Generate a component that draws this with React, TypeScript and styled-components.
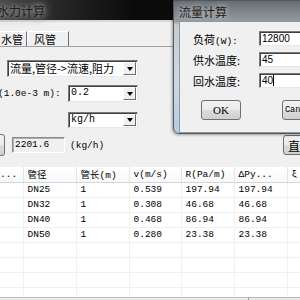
import React from 'react'
import styled, { createGlobalStyle } from 'styled-components'

const GlobalStyle = createGlobalStyle`
  html, body {
    margin: 0;
    padding: 0;
    width: 300px;
    height: 300px;
    overflow: hidden;
    background: #f0f0f0;
  }
`

const Screen = styled.div`
  position: relative;
  width: 300px;
  height: 300px;
  overflow: hidden;
  background: #f0f0f0;
  font-family: "Noto Sans CJK SC", "Liberation Sans", sans-serif;
  font-size: 11px;
  color: #000;
`

const MainTitle = styled.div`
  height: 20px;
  display: flex;
  align-items: center;
  background: linear-gradient(to right, #4a4a4a 0, #262626 20%, #0a0a0a 45%, #111 100%);
  border-bottom: 2px solid #d8d8d8;
  font-size: 12px;
  color: #1c1c1c;
  text-shadow: 0 0 4px #a8a8a8, 0 0 8px #8a8a8a, 0 0 12px #777;
  span {
    margin-left: -3px;
  }
`

const TabStrip = styled.div`
  display: flex;
  margin: 9px 0 0 -6px;
  height: 15px;
  border-bottom: 1px solid #a0a0a0;
`

const Tab = styled.div<{ $w: number }>`
  width: ${p => p.$w}px;
  box-sizing: border-box;
  height: 15px;
  padding-left: 6px;
  border-left: 1px solid #fff;
  border-top: 1px solid #fff;
  border-right: 1px solid #6e6e6e;
  line-height: 14px;
  background: #f0f0f0;
`

const Panel = styled.div`
  display: flex;
  flex-direction: column;
  padding-top: 13px;
`

const Row = styled.div<{ $top: number; $h: number }>`
  display: flex;
  align-items: center;
  margin-top: ${p => p.$top}px;
  height: ${p => p.$h}px;
`

const Label = styled.div<{ $w: number }>`
  width: ${p => p.$w}px;
  margin-left: -2px;
  font-family: "Liberation Mono", "Noto Sans CJK SC", monospace;
  font-size: 9.5px;
  white-space: nowrap;
`

const Combo = styled.div<{ $w: number; $h: number; $left?: number }>`
  display: flex;
  box-sizing: border-box;
  width: ${p => p.$w}px;
  height: ${p => p.$h}px;
  margin-left: ${p => p.$left ?? 0}px;
  border: 1px solid;
  border-color: #7a7a7a #e8e8e8 #e8e8e8 #7a7a7a;
  background: #fff;
  box-shadow: inset 1px 1px 0 #404040;
`

const ComboText = styled.div<{ $mono?: boolean }>`
  flex: 1;
  padding-left: 2px;
  white-space: nowrap;
  overflow: hidden;
  line-height: 14px;
  font-family: ${p => (p.$mono ? '"Liberation Mono", monospace' : '"Noto Sans CJK SC", sans-serif')};
  font-size: ${p => (p.$mono ? '10px' : '11px')};
`

const ArrowButton = styled.div`
  width: 13px;
  margin: 1px;
  background: #f0f0f0;
  border: 1px solid;
  border-color: #fff #6a6a6a #6a6a6a #fff;
  display: flex;
  align-items: center;
  justify-content: center;
  box-sizing: border-box;
  &::after {
    content: '';
    border-left: 3.5px solid transparent;
    border-right: 3.5px solid transparent;
    border-top: 4px solid #000;
  }
`

const PushButton = styled.div<{ $w: number; $h: number; $left?: number; $right?: number }>`
  box-sizing: border-box;
  width: ${p => p.$w}px;
  height: ${p => p.$h}px;
  margin-left: ${p => p.$left ?? 0}px;
  margin-right: ${p => p.$right ?? 0}px;
  border: 1px solid #707070;
  border-radius: 3px;
  background: linear-gradient(#f2f2f2, #ebebeb 50%, #dddddd 51%, #cfcfcf);
  display: flex;
  align-items: center;
  padding-left: 4px;
  font-size: 12px;
`

const ReadOnlyBox = styled.div`
  box-sizing: border-box;
  width: 53px;
  height: 16px;
  margin-left: 7px;
  border: 1px solid;
  border-color: #8a8a8a #fff #fff #8a8a8a;
  box-shadow: inset 1px 1px 0 #b0b0b0;
  background: #f0f0f0;
  padding-left: 2px;
  font-family: "Liberation Mono", monospace;
  font-size: 9.5px;
  line-height: 14px;
`

const Unit = styled.div`
  margin-left: 5px;
  font-family: "Liberation Mono", monospace;
  font-size: 9.5px;
`

const Spacer = styled.div`
  flex: 1;
`

const TableWrap = styled.div`
  margin-top: 10px;
  height: 130px;
  overflow: hidden;
  background: #fff;
`

const Grid = styled.table`
  border-collapse: collapse;
  table-layout: fixed;
  width: 310px;
  font-family: "Liberation Mono", "Noto Sans CJK SC", monospace;
  font-size: 9.5px;
`

const HeadCell = styled.th<{ $w: number }>`
  box-sizing: border-box;
  width: ${p => p.$w}px;
  height: 15px;
  padding: 0 0 0 4px;
  text-align: left;
  font-weight: normal;
  white-space: nowrap;
  overflow: hidden;
  background: linear-gradient(#ffffff, #f7f8fa);
  border-right: 1px solid #e3e5e8;
  border-bottom: 1px solid #d5d5d5;
  &:first-child {
    padding-left: 0;
  }
`

const Cell = styled.td`
  box-sizing: border-box;
  height: 15px;
  padding: 0 0 0 4px;
  white-space: nowrap;
  overflow: hidden;
  border-right: 1px solid #f0f0f0;
  border-bottom: 1px solid #f0f0f0;
`

const Scrollbar = styled.div`
  height: 3px;
  display: flex;
  background: #e8e8e8;
  border-top: 1px solid #b8b8b8;
`

const Thumb = styled.div`
  width: 248px;
  background: linear-gradient(#f4f4f4, #dcdcdc);
  border-right: 1px solid #9a9a9a;
`

/* dialog window, floats over the main window */
const Dialog = styled.div`
  position: absolute;
  left: 173px;
  top: 0;
  width: 150px;
  height: 134px;
  box-sizing: border-box;
  border: 1px solid #50565c;
  border-radius: 0 0 6px 6px;
  background: linear-gradient(#666c72 0, #959a9f 20px, #c7ccd2 24px, #cfd8e1 60%, #b3cce6 100%);
  box-shadow: -1px 1px 3px rgba(0, 0, 0, 0.35);
  display: flex;
  flex-direction: column;
`

const DialogTitle = styled.div`
  height: 21px;
  display: flex;
  align-items: center;
  padding-left: 5px;
  font-size: 12px;
  color: #1a1a1a;
  text-shadow: 0 0 4px #c8c8c8, 0 0 8px #b0b0b0;
`

const Client = styled.div`
  margin-left: 5px;
  height: 105px;
  border: 1px solid #8e99a5;
  border-right: none;
  background: #f0f0f0;
  padding: 9px 0 0 13px;
  display: flex;
  flex-direction: column;
  gap: 6px;
`

const Field = styled.div`
  display: flex;
  align-items: center;
  height: 15px;
`

const FieldLabel = styled.div`
  width: 66px;
  font-size: 11px;
  white-space: nowrap;
  span {
    font-family: "Liberation Mono", monospace;
    font-size: 9.5px;
  }
`

const FieldInput = styled.div`
  flex: 1;
  height: 15px;
  box-sizing: border-box;
  border: 1px solid;
  border-color: #7a7a7a #e8e8e8 #e8e8e8 #7a7a7a;
  box-shadow: inset 1px 1px 0 #404040;
  background: #fff;
  padding-left: 2px;
  font-family: "Liberation Sans", sans-serif;
  font-size: 10px;
  line-height: 13px;
`

const Caret = styled.span`
  display: inline-block;
  width: 1px;
  height: 11px;
  background: #000;
  vertical-align: -2px;
`

const DialogButtons = styled.div`
  display: flex;
  gap: 41px;
  margin: 6px 0 0 8px;
`

const DialogButton = styled.div<{ $mono?: boolean }>`
  box-sizing: border-box;
  width: 41px;
  height: 20px;
  border: 1px solid #707070;
  border-radius: 3px;
  background: linear-gradient(#f2f2f2, #ebebeb 50%, #dddddd 51%, #cfcfcf);
  display: flex;
  align-items: center;
  justify-content: ${p => (p.$mono ? 'flex-start' : 'center')};
  padding-left: ${p => (p.$mono ? '2px' : '0')};
  font-family: ${p => (p.$mono ? '"Liberation Mono", monospace' : '"Liberation Serif", serif')};
  font-size: ${p => (p.$mono ? '8.5px' : '11px')};
  white-space: nowrap;
  overflow: hidden;
`

const columns: [string, number][] = [
  ['...', 23],
  ['管径', 53],
  ['管长(m)', 53],
  ['v(m/s)', 52],
  ['R(Pa/m)', 53],
  ['ΔPy...', 53],
  ['ξ', 23],
]

const rows: string[][] = [
  ['', 'DN25', '1', '0.539', '197.94', '197.94', ''],
  ['', 'DN32', '1', '0.308', '46.68', '46.68', ''],
  ['', 'DN40', '1', '0.468', '86.94', '86.94', ''],
  ['', 'DN50', '1', '0.280', '23.38', '23.38', ''],
  ['', '', '', '', '', '', ''],
  ['', '', '', '', '', '', ''],
  ['', '', '', '', '', '', ''],
  ['', '', '', '', '', '', ''],
]

export default function App() {
  return (
    <Screen>
      <GlobalStyle />
      <MainTitle>
        <span>水力计算</span>
      </MainTitle>

      <TabStrip>
        <Tab $w={33}>水管</Tab>
        <Tab $w={42}>风管</Tab>
      </TabStrip>

      <Panel>
        <Row $top={0} $h={17}>
          <Combo $w={131} $h={17} $left={7}>
            <ComboText>流量,管径-&gt;流速,阻力</ComboText>
            <ArrowButton />
          </Combo>
        </Row>
        <Row $top={8} $h={17}>
          <Label $w={70}>(1.0e-3 m):</Label>
          <Combo $w={70} $h={17}>
            <ComboText $mono>0.2</ComboText>
            <ArrowButton />
          </Combo>
        </Row>
        <Row $top={10} $h={16}>
          <Combo $w={70} $h={16} $left={68}>
            <ComboText $mono>kg/h</ComboText>
            <ArrowButton />
          </Combo>
        </Row>
        <Row $top={5} $h={24}>
          <PushButton $w={20} $h={22} $left={-15} />
          <ReadOnlyBox>2201.6</ReadOnlyBox>
          <Unit>(kg/h)</Unit>
          <Spacer />
          <PushButton $w={30} $h={20} $right={-13}>
            直
          </PushButton>
        </Row>
      </Panel>

      <TableWrap>
        <Grid>
          <thead>
            <tr>
              {columns.map(([name, w]) => (
                <HeadCell key={name} $w={w}>
                  {name}
                </HeadCell>
              ))}
            </tr>
          </thead>
          <tbody>
            {rows.map((r, i) => (
              <tr key={i}>
                {r.map((c, j) => (
                  <Cell key={j}>{c}</Cell>
                ))}
              </tr>
            ))}
          </tbody>
        </Grid>
      </TableWrap>
      <Scrollbar>
        <Thumb />
      </Scrollbar>

      <Dialog>
        <DialogTitle>流量计算</DialogTitle>
        <Client>
          <Field>
            <FieldLabel>
              负荷<span>(W):</span>
            </FieldLabel>
            <FieldInput>12800</FieldInput>
          </Field>
          <Field>
            <FieldLabel>供水温度:</FieldLabel>
            <FieldInput>45</FieldInput>
          </Field>
          <Field>
            <FieldLabel>回水温度:</FieldLabel>
            <FieldInput>
              40<Caret />
            </FieldInput>
          </Field>
          <DialogButtons>
            <DialogButton>OK</DialogButton>
            <DialogButton $mono>Cancel</DialogButton>
          </DialogButtons>
        </Client>
      </Dialog>
    </Screen>
  )
}
